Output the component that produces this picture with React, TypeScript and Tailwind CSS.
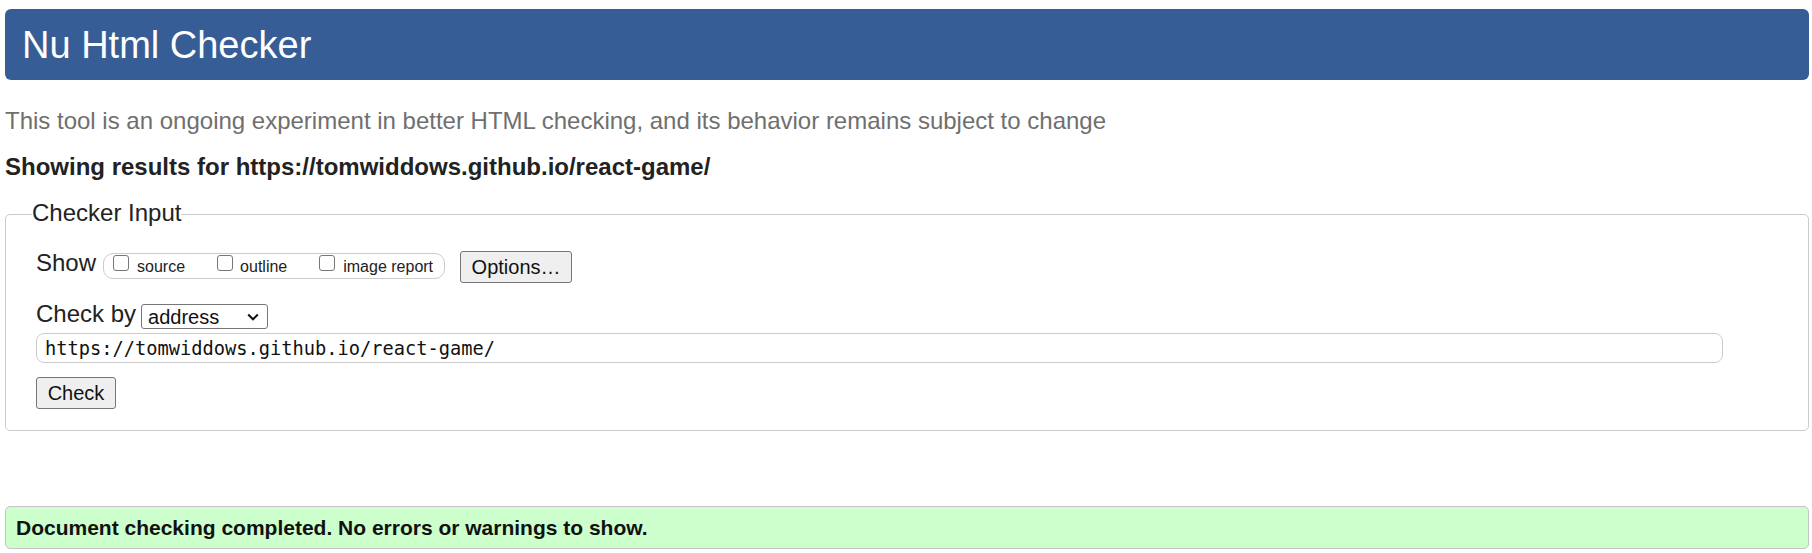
export default function App() {
  return (
    <div className="min-h-[553px] bg-white pt-[9px] pl-[5px] pr-[3px] text-[24px] text-[#222] [font-family:'Liberation_Sans',Arial,sans-serif]">
      {/* Title bar */}
      <h1 className="flex h-[71px] items-center rounded-[6px] bg-[#365d95] pl-[17px] text-[38px] leading-none font-normal text-white">
        Nu Html Checker
      </h1>

      <p className="mt-[27px] leading-[28px] text-[#6f6f6f]">
        This tool is an ongoing experiment in better HTML checking, and its behavior remains subject to change
      </p>
      <p className="mt-[18px] leading-[28px] font-bold">
        Showing results for https://tomwiddows.github.io/react-game/
      </p>

      <fieldset className="mt-[18px] rounded-[5px] border border-[#ccc] pt-[21px] pr-[30px] pb-[21px] pl-[30px]">
        <legend className="-ml-[4px] pb-[3px] leading-[28px]">Checker Input</legend>

        {/* Show row */}
        <div className="flex items-start">
          <span className="leading-[24px]">Show</span>
          <div className="mt-[2px] ml-[7px] flex h-[26px] items-start rounded-[10px] border border-[#ccc] pr-[11px] pl-[9px] text-[16px]">
            <label className="flex items-start">
              <input type="checkbox" className="mt-[1px] h-4 w-4 appearance-none rounded-[3px] border border-[#767676] bg-white" />
              <span className="mt-[5px] ml-[8px] leading-none">source</span>
            </label>
            <label className="ml-[32px] flex items-start">
              <input type="checkbox" className="mt-[1px] h-4 w-4 appearance-none rounded-[3px] border border-[#767676] bg-white" />
              <span className="mt-[5px] ml-[7px] leading-none">outline</span>
            </label>
            <label className="ml-[32px] flex items-start">
              <input type="checkbox" className="mt-[1px] h-4 w-4 appearance-none rounded-[3px] border border-[#767676] bg-white" />
              <span className="mt-[5px] ml-[8px] leading-none">image report</span>
            </label>
          </div>
          <button className="ml-[15px] flex h-[32px] w-[112px] items-center justify-center rounded-[3px] border border-[#767676] bg-[#efefef] text-[20px] text-[#111]">
            Options…
          </button>
        </div>

        {/* Check by row */}
        <div className="mt-[19px] flex items-start">
          <span className="leading-[24px]">Check by</span>
          <div className="mt-[2px] ml-[5px] flex h-[25px] w-[127px] items-center justify-between rounded-[3px] border border-[#767676] bg-white pr-[8px] pl-[6px] text-[20px] leading-none text-[#111]">
            <span>address</span>
            <svg width="12" height="8" viewBox="0 0 12 8" fill="none">
              <path d="M1.2 1.5l4.8 4.8 4.8-4.8" stroke="#111" strokeWidth="2" />
            </svg>
          </div>
        </div>

        <input
          readOnly
          value="https://tomwiddows.github.io/react-game/"
          className="mt-[4px] block h-[30px] w-[1687px] rounded-[8px] border border-[#ccc] bg-white pl-[8px] text-[18.7px] text-[#111] outline-none [font-family:'DejaVu_Sans_Mono',monospace]"
        />

        <button className="mt-[14px] flex h-[32px] w-[80px] items-center justify-center rounded-[3px] border border-[#767676] bg-[#efefef] text-[20px] text-[#111]">
          Check
        </button>
      </fieldset>

      {/* Result */}
      <div className="mt-[75px] h-[43px] rounded-[5px] border border-[#c4c4c4] bg-[#ccffcc] pt-[9px] pl-[10px] text-[21px] leading-[24px] font-bold text-[#111]">
        Document checking completed. No errors or warnings to show.
      </div>
    </div>
  )
}
